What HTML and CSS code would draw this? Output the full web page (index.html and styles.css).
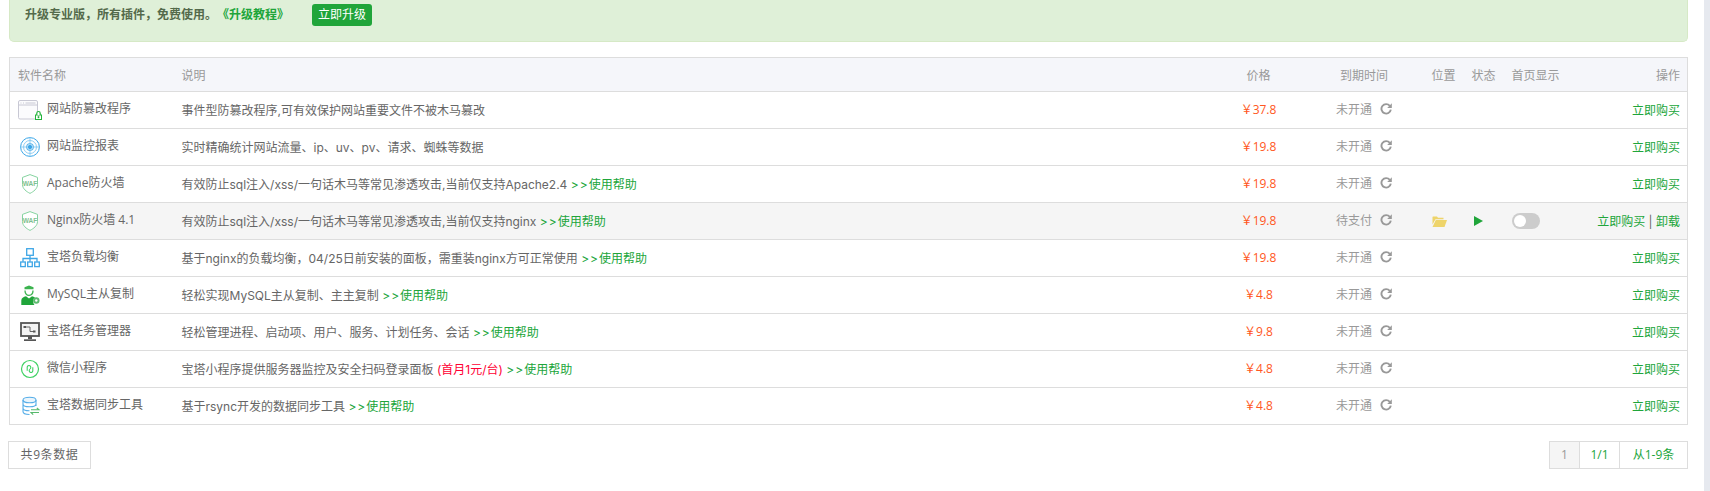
FILE: index.html
```html
<!DOCTYPE html>
<html lang="zh-CN">
<head>
<meta charset="utf-8">
<title>软件管理</title>
<link rel="stylesheet" href="styles.css">
</head>
<body>
<svg class="defs" width="0" height="0" aria-hidden="true">
  <symbol id="renew" viewBox="0 0 12 12"><path d="M9.800 2.900A4.700 4.700 0 1 0 10.800 6.600" fill="none" stroke="#999" stroke-width="1.900"/><path d="M11.800 0.300v4.600H7.200z" fill="#999"/></symbol>
</svg>
<div class="page">
<main class="content">
  <div class="notice">
    <span class="notice-text">升级专业版，所有插件，免费使用。</span><a class="notice-link">《升级教程》</a><a class="btn-upgrade">立即升级</a>
  </div>
  <table class="soft">
    <colgroup>
      <col class="c-name"><col class="c-desc"><col class="c-price"><col class="c-exp"><col class="c-pos"><col class="c-state"><col class="c-home"><col class="c-op">
    </colgroup>
    <thead>
      <tr><th>软件名称</th><th>说明</th><th class="ctr">价格</th><th class="ctr">到期时间</th><th>位置</th><th>状态</th><th>首页显示</th><th class="rt">操作</th></tr>
    </thead>
    <tbody>
      <tr>
        <td><div class="nm"><svg class="ico" viewBox="0 0 24 20"><rect x="0.500" y="0.500" width="19" height="18.500" rx="1.500" fill="#fbfbfd" stroke="#c8c8d4"/><path d="M1 5h18" stroke="#c8c8d4"/><path d="M2.500 3h1M5 3h1M7.500 3h10" stroke="#c8c8d4"/><rect x="17.500" y="15" width="6" height="4.500" fill="#fff" stroke="#22b33a"/><path d="M18.800 15v-1.800a1.700 1.700 0 0 1 3.400 0V15" fill="#fff" stroke="#22b33a" stroke-width="1.200"/><rect x="19.700" y="16.200" width="1.600" height="2" fill="#22b33a"/></svg><span>网站防篡改程序</span></div></td>
        <td class="desc">事件型防篡改程序,可有效保护网站重要文件不被木马篡改</td>
        <td class="ctr price">￥37.8</td>
        <td class="ctr"><span class="exp">未开通</span><svg class="renew"><use href="#renew"/></svg></td>
        <td></td><td></td><td></td>
        <td class="rt"><a class="lnk">立即购买</a></td>
      </tr>
      <tr>
        <td><div class="nm"><svg class="ico" viewBox="0 0 24 20" fill="none" stroke="#3aa6e8"><circle cx="12" cy="10" r="9.400"/><circle cx="12" cy="10" r="6.500" stroke="#8fcdf2"/><circle cx="12" cy="10" r="3.500"/><path d="M2.500 10h19M12 0.500v19" stroke="#8fcdf2"/><circle cx="12" cy="10" r="1.800" fill="#3aa6e8"/></svg><span>网站监控报表</span></div></td>
        <td class="desc">实时精确统计网站流量、ip、uv、pv、请求、蜘蛛等数据</td>
        <td class="ctr price">￥19.8</td>
        <td class="ctr"><span class="exp">未开通</span><svg class="renew"><use href="#renew"/></svg></td>
        <td></td><td></td><td></td>
        <td class="rt"><a class="lnk">立即购买</a></td>
      </tr>
      <tr>
        <td><div class="nm"><svg class="ico" viewBox="0 0 24 20"><path d="M12 0.600 19.500 3.400V10.500C19.500 14.800 15.500 17.600 12 19.400 8.500 17.600 4.500 14.800 4.500 10.500V3.400Z" fill="#fff" stroke="#86d3a0"/><text x="12" y="12" class="waf">WAF</text></svg><span>Apache防火墙</span></div></td>
        <td class="desc">有效防止sql注入/xss/一句话木马等常见渗透攻击,当前仅支持Apache2.4 <a class="lnk"><span class="gt">&gt;&gt;</span>使用帮助</a></td>
        <td class="ctr price">￥19.8</td>
        <td class="ctr"><span class="exp">未开通</span><svg class="renew"><use href="#renew"/></svg></td>
        <td></td><td></td><td></td>
        <td class="rt"><a class="lnk">立即购买</a></td>
      </tr>
      <tr class="hl">
        <td><div class="nm"><svg class="ico" viewBox="0 0 24 20"><path d="M12 0.600 19.500 3.400V10.500C19.500 14.800 15.500 17.600 12 19.400 8.500 17.600 4.500 14.800 4.500 10.500V3.400Z" fill="#fff" stroke="#86d3a0"/><text x="12" y="12" class="waf">WAF</text></svg><span>Nginx防火墙 4.1</span></div></td>
        <td class="desc">有效防止sql注入/xss/一句话木马等常见渗透攻击,当前仅支持nginx <a class="lnk"><span class="gt">&gt;&gt;</span>使用帮助</a></td>
        <td class="ctr price">￥19.8</td>
        <td class="ctr"><span class="exp">待支付</span><svg class="renew"><use href="#renew"/></svg></td>
        <td class="ic"><svg class="folder" viewBox="0 0 15 11"><path d="M1 0.500h4l1 1.300h5.500v1.400H3.500L0.500 8.500V1Z" fill="#eed46a"/><path d="M3.800 4H15L12.500 11H0.500Z" fill="#eed46a"/></svg></td>
        <td class="ic"><svg class="play" viewBox="0 0 9 10"><path d="M0 0 9 5 0 10Z" fill="#20a53a"/></svg></td>
        <td class="ic"><span class="switch"><span class="knob"></span></span></td>
        <td class="rt"><a class="lnk">立即购买</a> | <a class="lnk">卸载</a></td>
      </tr>
      <tr>
        <td><div class="nm"><svg class="ico" viewBox="0 0 24 20" fill="none" stroke="#3ea6e6" stroke-width="1.300"><rect x="8.700" y="0.700" width="6.600" height="6.600"/><path d="M12 7.300v3.200M5 13.800v-3.300h14v3.300M12 10.500v3.300"/><rect x="2.700" y="14" width="4.600" height="4.600"/><rect x="9.700" y="14" width="4.600" height="4.600"/><rect x="16.700" y="14" width="4.600" height="4.600"/></svg><span>宝塔负载均衡</span></div></td>
        <td class="desc">基于nginx的负载均衡，04/25日前安装的面板，需重装nginx方可正常使用 <a class="lnk"><span class="gt">&gt;&gt;</span>使用帮助</a></td>
        <td class="ctr price">￥19.8</td>
        <td class="ctr"><span class="exp">未开通</span><svg class="renew"><use href="#renew"/></svg></td>
        <td></td><td></td><td></td>
        <td class="rt"><a class="lnk">立即购买</a></td>
      </tr>
      <tr>
        <td><div class="nm"><svg class="ico" viewBox="0 0 24 20"><path d="M6.500 2.300 11 0.500 15.500 2.300V4.300H6.500Z" fill="#3cb34f"/><path d="M7 5.500C7 8.500 8.700 10.300 11 10.300S15 8.500 15 5.500" fill="none" stroke="#3cb34f" stroke-width="1.300"/><path d="M3.300 20V15.500C3.300 13 5.500 12 8 11.300L11 13.500 14 11.300C15 11.600 16 12 17 12.500 15 14 14.500 17.500 16.500 20Z" fill="#20a53a"/><circle cx="18.300" cy="15.500" r="3.200" fill="#5dbb6f"/><circle cx="18.300" cy="15.500" r="1.200" fill="#fff"/></svg><span>MySQL主从复制</span></div></td>
        <td class="desc">轻松实现MySQL主从复制、主主复制 <a class="lnk"><span class="gt">&gt;&gt;</span>使用帮助</a></td>
        <td class="ctr price">￥4.8</td>
        <td class="ctr"><span class="exp">未开通</span><svg class="renew"><use href="#renew"/></svg></td>
        <td></td><td></td><td></td>
        <td class="rt"><a class="lnk">立即购买</a></td>
      </tr>
      <tr>
        <td><div class="nm"><svg class="ico" viewBox="0 0 24 20"><rect x="3" y="1" width="18" height="13" fill="#f4f4f4" stroke="#555" stroke-width="1.800"/><path d="M10 14h4v3h-4Z" fill="#555"/><path d="M6 17.300h12v1.700H6Z" fill="#555"/><path d="M7 5h5v4.500h4" fill="none" stroke="#666"/><rect x="5.500" y="4" width="2.500" height="2" fill="#555"/><rect x="15" y="8.500" width="2.500" height="2" fill="#555"/></svg><span>宝塔任务管理器</span></div></td>
        <td class="desc">轻松管理进程、启动项、用户、服务、计划任务、会话 <a class="lnk"><span class="gt">&gt;&gt;</span>使用帮助</a></td>
        <td class="ctr price">￥9.8</td>
        <td class="ctr"><span class="exp">未开通</span><svg class="renew"><use href="#renew"/></svg></td>
        <td></td><td></td><td></td>
        <td class="rt"><a class="lnk">立即购买</a></td>
      </tr>
      <tr>
        <td><div class="nm"><svg class="ico" viewBox="0 0 24 20" fill="none" stroke="#3ed162"><circle cx="12" cy="10" r="8.500" stroke-width="1.200"/><path d="M9.200 11.800V8.300a1.800 1.800 0 1 1 2.800 1.500M14.800 8.200v3.500a1.800 1.800 0 1 1-2.800-1.500" stroke-width="1.100"/></svg><span>微信小程序</span></div></td>
        <td class="desc">宝塔小程序提供服务器监控及安全扫码登录面板 <span class="promo">(首月1元/台)</span> <a class="lnk"><span class="gt">&gt;&gt;</span>使用帮助</a></td>
        <td class="ctr price">￥4.8</td>
        <td class="ctr"><span class="exp">未开通</span><svg class="renew"><use href="#renew"/></svg></td>
        <td></td><td></td><td></td>
        <td class="rt"><a class="lnk">立即购买</a></td>
      </tr>
      <tr>
        <td><div class="nm"><svg class="ico" viewBox="0 0 24 20" fill="none" stroke="#55ade8" stroke-width="1.100"><ellipse cx="11.500" cy="4" rx="6.500" ry="2.800" fill="#eaf5fc"/><path d="M5 4V15.500C5 17.500 8 18.500 11.500 18.500M18 4V10M5 8C5 10 8 10.800 11.500 10.800S18 10 18 8M5 12C5 14 8 14.800 11.500 14.800"/><path d="M13 13.800H21L18.800 11.800M21 16.500H13L15.200 18.700" stroke="#56b96b"/></svg><span>宝塔数据同步工具</span></div></td>
        <td class="desc">基于rsync开发的数据同步工具 <a class="lnk"><span class="gt">&gt;&gt;</span>使用帮助</a></td>
        <td class="ctr price">￥4.8</td>
        <td class="ctr"><span class="exp">未开通</span><svg class="renew"><use href="#renew"/></svg></td>
        <td></td><td></td><td></td>
        <td class="rt"><a class="lnk">立即购买</a></td>
      </tr>
    </tbody>
  </table>
  <div class="foot">
    <span class="total">共9条数据</span>
    <div class="pager"><span class="pg cur">1</span><span class="pg mid">1/1</span><span class="pg last">从1-9条</span></div>
  </div>
</main>
<div class="rail"></div>
</div>
</body>
</html>
```

FILE: styles.css
```css
* { box-sizing: border-box; }
html, body { margin: 0; height: 100%; }
body {
  font-family: "Open Sans", "Noto Sans CJK SC", sans-serif;
  font-size: 12px;
  color: #666;
  background: #fff;
  overflow: hidden;
}
.defs { position: absolute; }
.page { display: flex; height: 491px; }
.content { width: 1704px; padding-right: 16px; padding-left: 9px; flex: none; }
.rail { flex: 1; background: #e6e9ef; }
.notice {
  height: 42px;
  padding: 4px 0 0 15px;
  display: flex;
  align-items: flex-start;
  background: #dff0d8;
  border: 1px solid #d6e9c6;
  border-top: 0;
  border-radius: 0 0 5px 5px;
  line-height: 22px;
  margin-bottom: 15px;
}
.notice-text { font-weight: 700; color: #546a4b; }
.notice-link { color: #20a53a; font-weight: 700; }
.btn-upgrade {
  margin-left: 23px;
  width: 60px;
  height: 22px;
  text-align: center;
  color: #fff;
  background: #20a53a;
  border-radius: 3px;
}
.soft {
  width: 1679px;
  table-layout: fixed;
  border-collapse: collapse;
  border: 1px solid #ddd;
}
.c-name { width: 164px; }
.c-desc { width: 1039px; }
.c-price { width: 92px; }
.c-exp { width: 119px; }
.c-pos { width: 40px; }
.c-state { width: 40px; }
.c-home { width: 64px; }
.c-op { width: 120px; }
th, td {
  padding: 0 8px;
  text-align: left;
  font-weight: 400;
  white-space: nowrap;
  border-bottom: 1px solid #ddd;
}
td + td { padding-bottom: 2px; }
td.ic { padding-bottom: 0; }
thead tr { height: 34px; background: #f5f6fa; }
th { color: #999; }
tbody tr { height: 37px; }
tr.hl { background: #f5f5f5; }
.ctr { text-align: center; }
th.rt, td.rt { text-align: right; padding-right: 7px; }
td.rt, .desc { font-family: Inter, "Noto Sans CJK SC", sans-serif; }
.nm { display: flex; align-items: center; gap: 5px; }
.nm span { position: relative; top: -2px; }
.ico { width: 24px; height: 20px; flex: none; display: block; }
.waf { font: 700 6.5px "Liberation Sans", sans-serif; fill: #7fbf90; text-anchor: middle; }
.price { color: #ff5722; }
.exp { color: #999; }
.renew { width: 12px; height: 12px; margin-left: 8px; vertical-align: -1px; }
.lnk { color: #20a53a; }
.gt { letter-spacing: 1px; }
.promo { color: #ff0033; }
.folder { width: 15px; height: 11px; display: block; }
.play { width: 9px; height: 10px; display: block; margin-left: 2px; }
.switch {
  display: block;
  position: relative;
  width: 28px;
  height: 16px;
  border-radius: 8px;
  background: #ccc;
}
.knob {
  position: absolute;
  left: 2px;
  top: 2px;
  width: 12px;
  height: 12px;
  border-radius: 50%;
  background: #fff;
}
.foot {
  display: flex;
  justify-content: space-between;
  align-items: flex-start;
  margin-top: 16px;
  margin-left: -1px;
}
.total {
  height: 28px;
  line-height: 26px;
  width: 83px;
  text-align: center;
  border: 1px solid #ddd;
  color: #666;
  letter-spacing: 0.6px;
}
.pager { display: flex; }
.pg {
  height: 28px;
  line-height: 26px;
  text-align: center;
  border: 1px solid #ddd;
  border-left: 0;
  color: #20a53a;
}
.pg.cur { border-left: 1px solid #ddd; background: #f5f5f5; color: #999; width: 31px; }
.pg.mid { width: 40px; }
.pg.last { width: 68px; }
```
